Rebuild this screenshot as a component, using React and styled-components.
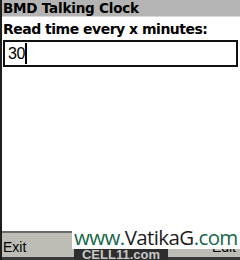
import React from "react";
import styled, { createGlobalStyle } from "styled-components";

const Global = createGlobalStyle`
  html, body { margin: 0; padding: 0; background: #fff; }
  body { width: 240px; height: 260px; overflow: hidden; }
`;

const Screen = styled.div`
  position: relative;
  width: 240px;
  height: 260px;
  display: flex;
  flex-direction: column;
  background: #fff;
  border-left: 2px solid #1e1e1e;
  box-sizing: border-box;
  font-family: "DejaVu Sans", "Liberation Sans", sans-serif;
  color: #000;
  overflow: hidden;
`;

const TitleBar = styled.div`
  height: 16px;
  background: #b4b4b4;
  border-bottom: 1px solid #d8d8d8;
  padding-left: 1px;
  font-weight: bold;
  font-size: 13.5px;
  line-height: 16px;
  letter-spacing: -0.2px;
`;

const Body = styled.div`
  flex: 1;
  padding: 3px 2px 0 1px;
`;

const Label = styled.div`
  font-weight: bold;
  font-size: 14px;
  line-height: 19px;
  letter-spacing: -0.5px;
`;

const Field = styled.div`
  height: 23px;
  margin-top: 1px;
  border: 2px solid #111;
  display: flex;
  align-items: center;
  padding-left: 3px;
  font-size: 16px;
  font-family: "Liberation Sans", sans-serif;
  letter-spacing: -0.5px;
`;

const Caret = styled.span`
  display: inline-block;
  width: 2px;
  height: 21px;
  background: #000;
`;

const SoftKeys = styled.div`
  height: 29px;
  background: #bdbdb6;
  border-top: 2px solid #6a6a6a;
  display: flex;
  justify-content: space-between;
  align-items: flex-start;
  padding: 6px 4px 0 1px;
  box-sizing: border-box;
  font-family: "Liberation Sans", sans-serif;
  font-size: 14px;
  border-bottom: 3px solid #3a3a3a;
`;

const Watermark = styled.div`
  position: absolute;
  left: 70px;
  top: 225px;
  width: 168px;
  height: 24px;
  background: #fff;
  font-family: "Open Sans", "Liberation Sans", sans-serif;
  font-size: 20.5px;
  line-height: 24px;
  letter-spacing: -0.6px;
  color: #1c1c1c;
  white-space: nowrap;
  padding-left: 2px;
  box-sizing: border-box;
`;

const Green = styled.span`
  color: #17664c;
`;

const Badge = styled.div`
  position: absolute;
  left: 72px;
  top: 249px;
  width: 94px;
  height: 11px;
  background: #2e2e2e;
  color: #c8c8c8;
  font-family: "Liberation Sans", sans-serif;
  font-weight: bold;
  font-size: 13px;
  line-height: 12px;
  text-align: center;
  overflow: hidden;
`;

export default function App() {
  return (
    <>
      <Global />
      <Screen>
        <TitleBar>BMD Talking Clock</TitleBar>
        <Body>
          <Label>Read time every x minutes:</Label>
          <Field>
            30<Caret />
          </Field>
        </Body>
        <SoftKeys>
          <span>Exit</span>
          <span>Edit</span>
        </SoftKeys>
        <Watermark>
          <Green>www.</Green>VatikaG<Green>.com</Green>
        </Watermark>
        <Badge>CELL11.com</Badge>
      </Screen>
    </>
  );
}
